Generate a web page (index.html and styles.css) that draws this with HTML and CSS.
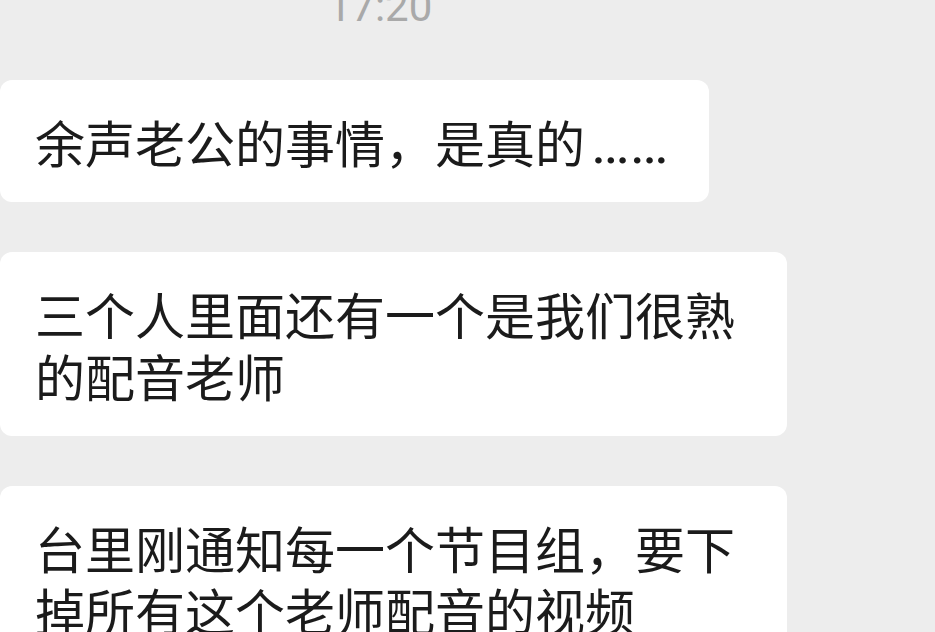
FILE: index.html
```html
<!doctype html>
<html lang="zh-CN">
<head>
  <meta charset="utf-8">
  <meta name="viewport" content="width=device-width, initial-scale=1.0">
  <title>聊天记录</title>
  <link rel="stylesheet" href="styles.css">
</head>
<body>

<div class="time">17:20</div>

<div class="chat">
  <div class="bubble">余声老公的事情，是真的<span class="dots">……</span></div>
  <div class="bubble">三个人里面还有一个是我们很熟的配音老师</div>
  <div class="bubble">台里刚通知每一个节目组，要下掉所有这个老师配音的视频</div>
</div>

</body>
</html>
```

FILE: styles.css
```css
html, body {
  margin: 0;
  padding: 0;
  height: 100%;
  overflow: hidden;
}

body {
  background: #ededed;
  font-family: "Noto Sans CJK SC", "Noto Sans", sans-serif;
  color: #1b1b1b;
}

.time {
  font-family: Roboto, "Noto Sans", sans-serif;
  font-size: 42px;
  line-height: 42px;
  color: #a9a9a9;
  text-align: center;
  padding-right: 175px;
  margin: -14px 0 52px;
}

.chat {
  display: flex;
  flex-direction: column;
  align-items: flex-start;
  gap: 50px;
}

.bubble {
  background: #fff;
  border-radius: 12px;
  font-size: 50px;
  line-height: 62px;
  padding: 30px 40px 30px 35px;
  max-width: 712px;
}

.dots {
  font-family: Roboto, "Liberation Sans", sans-serif;
  font-size: 58px;
  line-height: 0;
  padding-left: 6px;
}
```
